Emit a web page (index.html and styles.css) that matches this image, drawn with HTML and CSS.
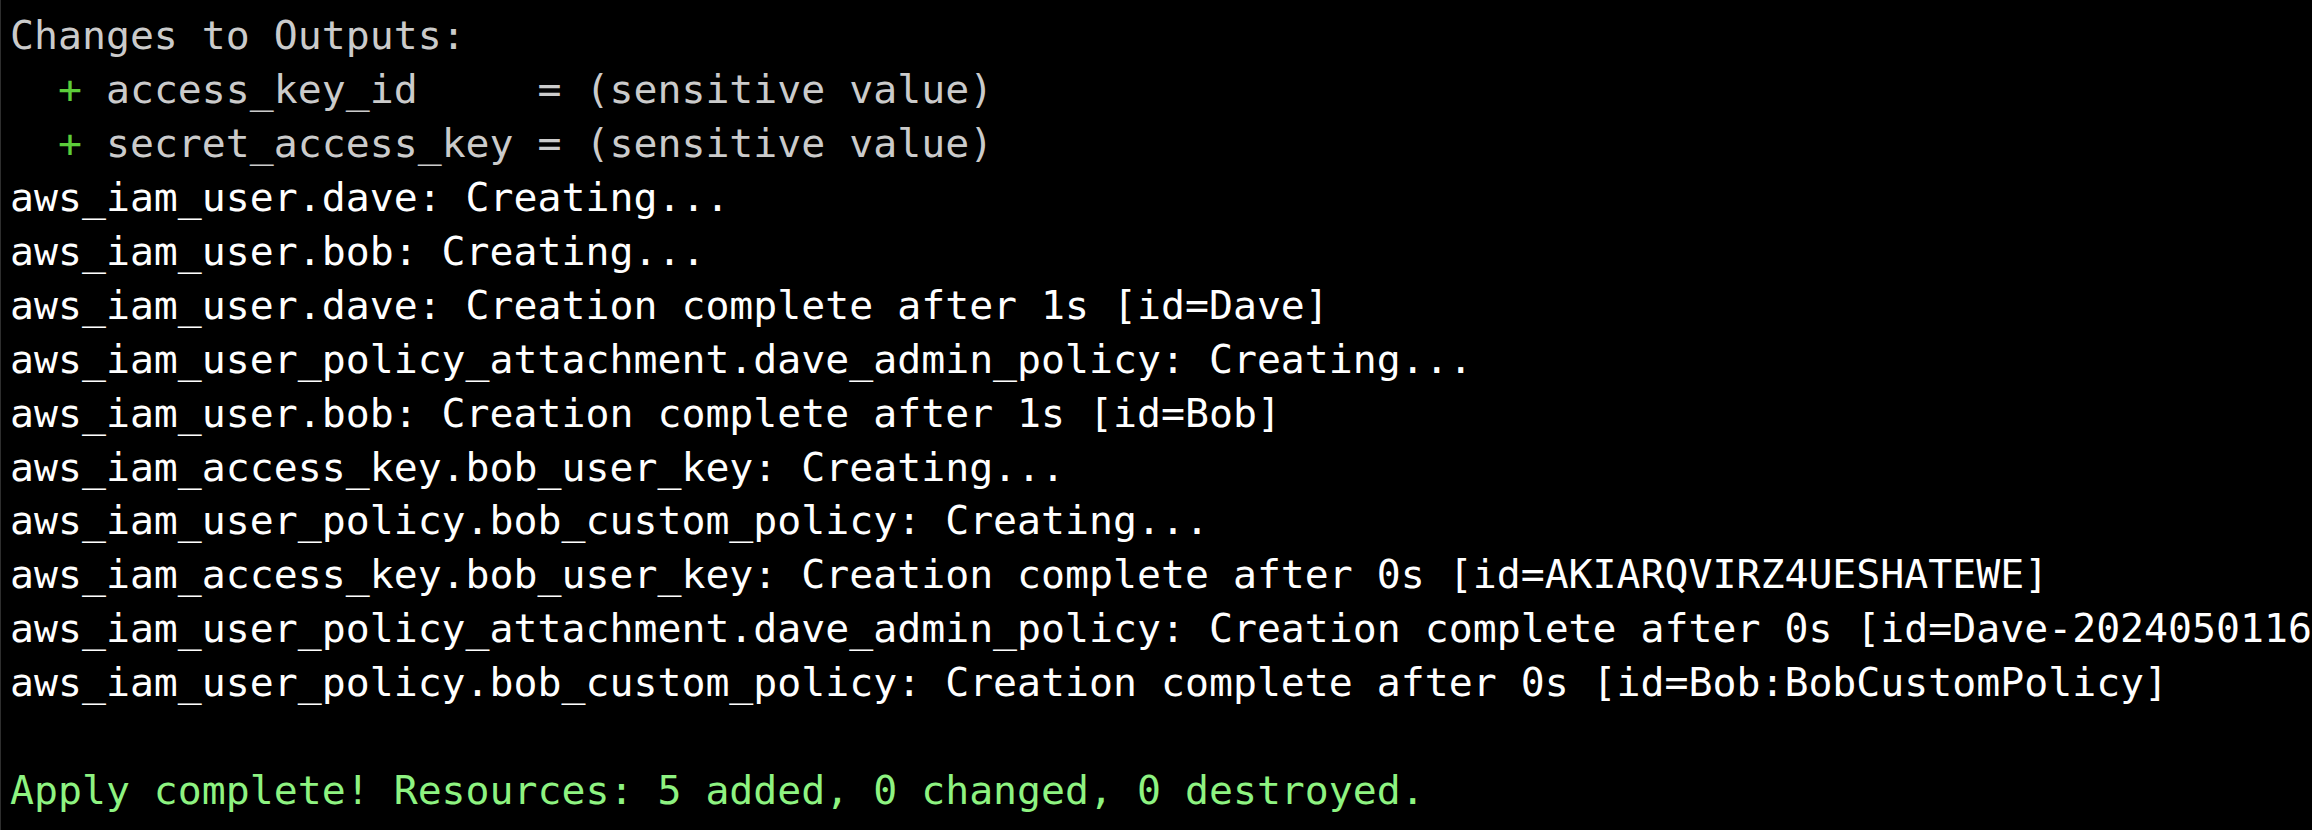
FILE: index.html
```html
<!DOCTYPE html>
<html>
<head>
<meta charset="utf-8">
<link rel="stylesheet" href="styles.css">
</head>
<body>
<div class="term">
<div class="line dim">Changes to Outputs:</div>
<div class="line dim">  <span class="plus">+</span> access_key_id     = (sensitive value)</div>
<div class="line dim">  <span class="plus">+</span> secret_access_key = (sensitive value)</div>
<div class="line">aws_iam_user.dave: Creating...</div>
<div class="line">aws_iam_user.bob: Creating...</div>
<div class="line">aws_iam_user.dave: Creation complete after 1s [id=Dave]</div>
<div class="line">aws_iam_user_policy_attachment.dave_admin_policy: Creating...</div>
<div class="line">aws_iam_user.bob: Creation complete after 1s [id=Bob]</div>
<div class="line">aws_iam_access_key.bob_user_key: Creating...</div>
<div class="line">aws_iam_user_policy.bob_custom_policy: Creating...</div>
<div class="line">aws_iam_access_key.bob_user_key: Creation complete after 0s [id=AKIARQVIRZ4UESHATEWE]</div>
<div class="line">aws_iam_user_policy_attachment.dave_admin_policy: Creation complete after 0s [id=Dave-2024050116</div>
<div class="line">aws_iam_user_policy.bob_custom_policy: Creation complete after 0s [id=Bob:BobCustomPolicy]</div>
<div class="line"> </div>
<div class="line ok">Apply complete! Resources: 5 added, 0 changed, 0 destroyed.</div>
</div>
</body>
</html>
```
FILE: styles.css
```css
html, body {
  margin: 0;
  padding: 0;
  background: #000;
  height: 100%;
  overflow: hidden;
}
.term {
  box-sizing: border-box;
  height: 830px;
  border-left: 1px solid #2e2e2e;
  padding: 9px 0 0 9px;
  font-family: "DejaVu Sans Mono", monospace;
  font-size: 39.85px;
  color: #ffffff;
  overflow: hidden;
}
.line {
  height: 53.95px;
  line-height: 53.95px;
  white-space: pre;
}
.dim {
  color: #cbcbcb;
}
.plus {
  color: #5ccd3a;
}
.ok {
  color: #8ef381;
}
```
